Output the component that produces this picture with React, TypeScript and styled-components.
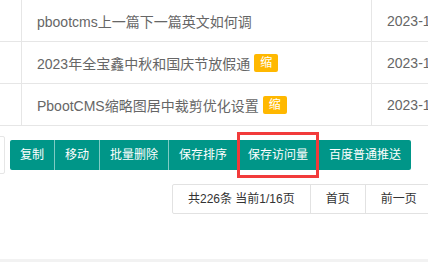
import styled, { createGlobalStyle } from "styled-components";

const GlobalStyle = createGlobalStyle`
  html, body {
    margin: 0;
    padding: 0;
    background: #f2f2f2;
    font-family: "Liberation Sans", "Noto Sans CJK SC", sans-serif;
  }
  * {
    box-sizing: border-box;
  }
`;

const Card = styled.div`
  width: 428px;
  background: #fff;
  overflow: hidden;
  padding-bottom: 45px;
`;

const Table = styled.div`
  width: 100%;
`;

const Row = styled.div`
  display: grid;
  grid-template-columns: 22px 350px 1fr;
  border-bottom: 1px solid #e6e6e6;
`;

const Cell = styled.div<{ last?: boolean; narrow?: boolean }>`
  height: 41px;
  display: flex;
  align-items: center;
  padding: ${(p) => (p.narrow ? "0" : "0 15px")};
  border-right: ${(p) => (p.last ? "none" : "1px solid #e6e6e6")};
  font-size: 14px;
  color: #666;
  white-space: nowrap;
  overflow: hidden;
`;

const Badge = styled.span`
  display: inline-block;
  height: 18px;
  line-height: 18px;
  padding: 0 6px;
  margin-left: 4px;
  font-size: 12px;
  color: #fff;
  background: #ffb800;
  border-radius: 2px;
`;

const Toolbar = styled.div`
  display: flex;
  align-items: center;
  height: 38px;
  margin-top: 10px;
`;

const SelectBox = styled.div`
  flex: none;
  width: 120px;
  height: 38px;
  margin-left: -115px;
  margin-right: 5px;
  border: 1px solid #e6e6e6;
  border-radius: 2px;
  background: #fff;
`;

const BtnGroup = styled.div`
  display: flex;
`;

const Btn = styled.button`
  position: relative;
  height: 30px;
  line-height: 30px;
  padding: 0 10px;
  margin: 0;
  border: none;
  border-left: 1px solid rgba(255, 255, 255, 0.5);
  background: #009688;
  color: #fff;
  font-family: inherit;
  font-size: 12px;
  white-space: nowrap;
  cursor: pointer;

  &:first-child {
    border-left: none;
    border-radius: 2px 0 0 2px;
  }
  &:last-child {
    border-radius: 0 2px 2px 0;
  }
`;

const Highlight = styled.span`
  position: absolute;
  top: -8px;
  bottom: -8px;
  left: -1px;
  right: -1px;
  border: 3px solid #f23b3b;
  z-index: 1;
  pointer-events: none;
`;

const Pager = styled.div`
  display: flex;
  margin-top: 10px;
  margin-left: 172px;
  white-space: nowrap;
`;

const PageItem = styled.span`
  flex: none;
  height: 30px;
  line-height: 28px;
  padding: 0 15px;
  margin-right: -1px;
  border: 1px solid #e2e2e2;
  font-size: 12px;
  color: #333;
  background: #fff;

  &:first-child {
    border-radius: 2px 0 0 2px;
  }
`;

const rows = [
  { title: "pbootcms上一篇下一篇英文如何调", badge: false, date: "2023-10-08" },
  { title: "2023年全宝鑫中秋和国庆节放假通", badge: true, date: "2023-10-07" },
  { title: "PbootCMS缩略图居中裁剪优化设置", badge: true, date: "2023-10-07" },
];

const actions = ["复制", "移动", "批量删除", "保存排序", "保存访问量", "百度普通推送"];

const pages = ["共226条 当前1/16页", "首页", "前一页", "1", "2", "后一页", "尾页"];

export default function App() {
  return (
    <>
      <GlobalStyle />
      <Card>
        <Table>
          {rows.map((r) => (
            <Row key={r.title}>
              <Cell narrow />
              <Cell>
                {r.title}
                {r.badge && <Badge>缩</Badge>}
              </Cell>
              <Cell last>{r.date}</Cell>
            </Row>
          ))}
        </Table>
        <Toolbar>
          <SelectBox />
          <BtnGroup>
            {actions.map((a) => (
              <Btn key={a} type="button">
                {a}
                {a === "保存访问量" && <Highlight />}
              </Btn>
            ))}
          </BtnGroup>
        </Toolbar>
        <Pager>
          {pages.map((p) => (
            <PageItem key={p}>{p}</PageItem>
          ))}
        </Pager>
      </Card>
    </>
  );
}
